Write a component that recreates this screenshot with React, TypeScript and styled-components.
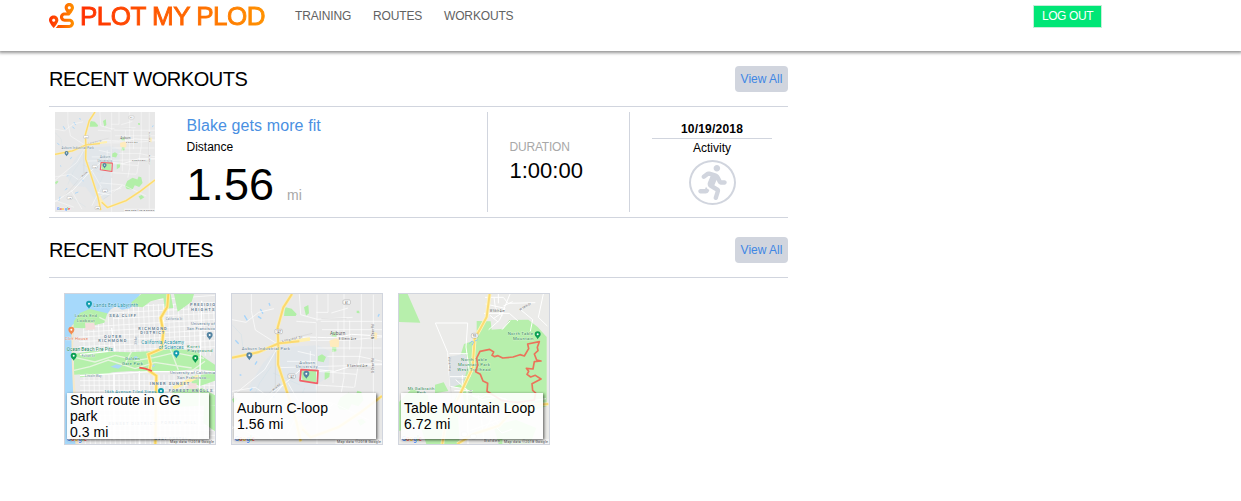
import React from 'react';
import styled, { createGlobalStyle } from 'styled-components';
import { FaRoute, FaRunning } from 'react-icons/fa';

const GlobalStyle = createGlobalStyle`
  * { box-sizing: border-box; }
  body { margin: 0; background: #fff; color: #000; font-family: "Liberation Sans", Arial, sans-serif; font-size: 12px; overflow: hidden; }
  h1, h2, p { margin: 0; font-weight: normal; }
`;

const Header = styled.header`
  display: flex;
  align-items: flex-start;
  height: 51px;
  padding-left: 49px;
  box-shadow: 0 1px 3px 1px rgba(0, 0, 0, 0.42);
`;
const Logo = styled.h1`
  display: flex;
  width: 246px;
  padding-top: 3px;
`;
const LogoName = styled.span`
  margin-left: 6px;
  height: 30px;
  margin-top: -3px;
  line-height: 32px;
  font-size: 26px;
  letter-spacing: -0.52px;
  white-space: nowrap;
  color: transparent;
  -webkit-text-stroke: 0.9px transparent;
  background: linear-gradient(90deg, #ff2f00, #ff9100);
  -webkit-background-clip: text;
  background-clip: text;
`;
const Nav = styled.nav`
  display: flex;
  flex: 1;
  padding-top: 9px;
`;
const NavLink = styled.a<{ $width: number }>`
  width: ${p => p.$width}px;
  line-height: 14px;
  letter-spacing: -0.15px;
  color: #626262;
`;
const LogOut = styled.button`
  width: 69px;
  height: 23px;
  margin: 5px 139px 0 0;
  padding: 0;
  border: 1px solid #c4eed8;
  background: #00e676;
  color: #fff;
  font: 12px/19px "Liberation Sans", Arial, sans-serif;
  letter-spacing: -0.4px;
`;
const Main = styled.main`
  width: 739px;
  margin: 15px 0 0 49px;
`;
const SectionHead = styled.div<{ $top?: number }>`
  display: flex;
  justify-content: space-between;
  align-items: center;
  height: 41px;
  padding-bottom: 14px;
  margin-top: ${p => p.$top ?? 0}px;
  border-bottom: 1px solid #d1d5de;
`;
const Title = styled.h2<{ $spacing: number }>`
  font-size: 20px;
  line-height: 26px;
  letter-spacing: ${p => p.$spacing}px;
`;
const ViewAll = styled.button`
  width: 53px;
  height: 26px;
  padding: 0;
  border: 0;
  border-radius: 4px;
  background: #d1d5de;
  color: #3f87e4;
  font: 12px/26px "Liberation Sans", Arial, sans-serif;
`;
const Workout = styled.article`
  display: flex;
  height: 111px;
  padding: 5px 0 5px 6px;
  border-bottom: 1px solid #d1d5de;
`;
const Summary = styled.div`
  width: 332px;
  padding: 4px 0 0 31.5px;
`;
const WorkoutName = styled.p`
  margin-bottom: 4px;
  font-size: 16px;
  line-height: 20px;
  letter-spacing: 0.1px;
  color: #4a90e2;
`;
const Label = styled.p<{ $muted?: boolean }>`
  line-height: 14px;
  letter-spacing: ${p => (p.$muted ? '-0.2px' : '0')};
  color: ${p => (p.$muted ? '#a8a8a8' : '#000')};
`;
const Distance = styled.p`
  margin-left: 0;
  font-size: 45px;
  line-height: 61px;
`;
const Unit = styled.span`
  margin-left: 13px;
  font-size: 14px;
  color: #a8a8a8;
`;
const Duration = styled.div`
  width: 142px;
  padding: 28px 0 0 21.5px;
  border-left: 1px solid #d1d5de;
`;
const Time = styled.p`
  font-size: 22px;
  line-height: 34px;
`;
const Activity = styled.div`
  display: flex;
  flex-direction: column;
  align-items: center;
  width: 159px;
  padding: 10px 16px 0 22px;
  border-left: 1px solid #d1d5de;
`;
const ActivityDate = styled.p`
  align-self: stretch;
  height: 17px;
  margin-bottom: 2px;
  border-bottom: 1px solid #d1d5de;
  text-align: center;
  font-weight: bold;
  line-height: 14px;
  letter-spacing: 0.2px;
`;
const ActivityIcon = styled.div`
  display: flex;
  align-items: flex-start;
  justify-content: center;
  width: 47px;
  height: 45px;
  margin-top: 5px;
  padding-top: 3px;
  border: 2px solid #d1d5de;
  border-radius: 50%;
  color: #d1d5de;
`;
const Routes = styled.div`
  display: flex;
  gap: 15px;
  padding: 15px 15px 0;
`;
const RouteCard = styled.article`
  position: relative;
  width: 152px;
  height: 152px;
  border: 1px solid #d1d5de;
`;
const Caption = styled.div`
  position: absolute;
  left: 2px;
  top: 99px;
  display: flex;
  flex-direction: column;
  justify-content: center;
  width: 142px;
  height: 46px;
  padding: 0 2px 0 3px;
  background: rgba(255, 255, 255, 0.9);
  box-shadow: 1px 1px 3px rgba(0, 0, 0, 0.65);
  font-size: 14px;
  line-height: 16px;
  letter-spacing: 0.06px;
`;
const MapSvg = styled.svg`
  display: block;
  flex: none;
  font-family: Roboto, sans-serif;
`;

interface PinProps { x: number; y: number; color: string; s?: number }
const Pin = ({ x, y, color, s = 1 }: PinProps) => (
  <g transform={`translate(${x} ${y}) scale(${s})`}>
    <path d="M0 12C-2 7-9 3-9-3A9 9 0 1 1 9-3C9 3 2 7 0 12Z" fill={color} />
    <circle cy="-3" r="3" fill="#fff" />
  </g>
);

interface TagProps { x: number; y: number; w: number; children: string; color?: string; size?: number; bold?: boolean; rotate?: number }
const Tag = ({ x, y, w, children, color = '#617b91', size = 12, bold, rotate = 0 }: TagProps) => (
  <text x={x} y={y} textLength={w} fontSize={size} fill={color} fontWeight={bold ? 600 : 400}
    stroke="#fff" strokeWidth="2" strokeOpacity=".6" paintOrder="stroke" transform={`rotate(${rotate} ${x} ${y})`}>{children}</text>
);

const Attribution = ({ x = 327 }: { x?: number }) => (
  <>
    <text x="20" y="460" fontSize="19" fontWeight="500" textLength="61" stroke="#fff" strokeWidth="2" paintOrder="stroke">
      <tspan fill="#4285f4">G</tspan><tspan fill="#ea4335">o</tspan><tspan fill="#fbbc05">o</tspan>
      <tspan fill="#4285f4">g</tspan><tspan fill="#34a853">l</tspan><tspan fill="#ea4335">e</tspan>
    </text>
    <rect x={x - 5} y="453" width="150" height="15" fill="#f5f5f5" opacity=".75" />
    <Tag x={x} y={464} w={132} color="#444" size={11}>Map data ©2018 Google</Tag>
  </>
);

const badges: [number, number, string][] = [[151, 131, '147'], [190, 265, '147'], [355, 43, '81']];
const southBadges: [number, number, string][] = [[236, 373, '29'], [77, 405, '15'], [203, 451, '85']];

const AuburnMap = ({ size, south }: { size: number; south?: boolean }) => (
  <MapSvg width={size} height={size} viewBox="12 18 450 450">
    <path fill="#e8e8e8" d="M12 18h450v450H12z" />
    <path fill="#e1e6ea" d="M150 178L270 172 305 190 300 265 268 290 264 390 205 430 150 355 95 350 60 300 105 225Z" />
    <g fill="#b2efa8">
      <path d="M173 58l18 4 15 16-3 6h-35l2-18ZM228 58l13-7 2 25-9 7ZM270 205l12-6 12 8-7 16-18-4ZM219 250l47-5 3 38-45-4ZM337 329l24-15 22 8 5-14 12 4 6 25-15 18-20-7-10 19-26-3-8-12ZM313 171h12v19l-13 2ZM290 253l16-4-2 18-14 9ZM12 334l10-7 6 5-12 12ZM388 397l14-5 12 10-17 11Z" />
      <path d="M312 132h14v15l-15-2ZM386 68h7l2 8-9-1Z" />
    </g>
    <g fill="none" stroke="#a5d4fb" strokeWidth="4">
      <path d="M49 82l9 15M97 63l8 14M90 85l10 7M22 157l10 10M66 308l7-8M81 230l6-10M35 260l5 2M123 45l3 8M58 370l9-10M30 417l5-18M102 384l15-6M135 322l4 8M450 86l4-8" />
    </g>
    <g fill="none" stroke="#d0e0e8" strokeWidth="1.5"><path d="M12 110l28 30 5 40M70 345l25-60 35-50M135 255l80 35M65 390l85 55M230 300l-35 80" /></g>
    <g fill="none" stroke="#fff" strokeWidth="2">
      <path d="M12 95l42 8 38-30 46-11M70 18v50l12 58 66 42M12 310l70-12 35 25 53-36M160 160l-50 85-98 80M205 100l60 4 2 364M267 20v135l-2 150M214 18l4 62 50 14 106-6M300 18v55h-35M348 18v250l-8 45M400 18v155l-20 125M436 20v450M278 100h184M282 125h180M222 157h130l110-10M267 180h193M298 205h95l70 15M155 239l312-9M270 250l115 9M267 291l110 7M177 220h86M209 190l52 12M180 285l40 70-42 85M215 337l102 9 105 50M205 400l55-25 50-15M12 416l85 30M85 370l48 85M310 75l50-15M330 100v53M365 98v87M315 185v100M247 189v58" />
      <path d="M160 160Q205 144 267 148T370 139L462 144M267 245L320 250 390 228H462M205 380L260 391 315 348M12 422L93 370 165 291 218 245" strokeWidth="3" />
    </g>
    <g fill="none" stroke="#c1c1c1"><path d="M142 193v102L53 399M155 160l98-24M267 100v215M280 92h75M434 112v140M358 240h70M230 410l60-40" strokeWidth="1" /></g>
    <path d="M304 158l20-7 10 5-2 22-25-2ZM436 131l12 4-2 20-10-4ZM208 410l8-18 7 20-4 35-15-6Z" fill="#ffebbd" />
    <g fill="none" stroke="#fff0b0" strokeWidth="10"><path d="M192 18L166 58 149 119 151 177 150 230 170 290 205 400 218 460M12 209L90 193 153 166 246 153M217 413L248 448 332 417 395 375 462 324" /></g>
    <g fill="none" stroke="#fbd970" strokeWidth="6"><path d="M192 18L166 58 149 119 151 177 150 230 170 290 205 400 218 460M12 209L90 193 153 166 214 160M222 424L248 448 332 417 395 375 462 324" /></g>
    {(south ? [...badges, ...southBadges] : badges).map(([x, y, t]) => (
      <g key={x}><rect x={x - 10} y={y - 7} width="22" height="13" rx="3" fill="#fff" stroke="#777" /><text x={x + 1} y={y + 4} fontSize="9" textAnchor="middle" fill="#555">{t}</text></g>
    ))}
    <Tag x={41} y={186} w={145} size={13}>Auburn Industrial Park</Tag>
    <Tag x={306} y={140} w={46} size={14} color="#555">Auburn</Tag>
    <Tag x={214} y={227} w={47} size={13}>Auburn</Tag>
    <Tag x={203} y={241} w={66} size={13}>University</Tag>
    <Tag x={163} y={162} w={62} size={9} color="#555" rotate={-12}>Longleaf Dr</Tag>
    <Tag x={332} y={157} w={52} size={9} color="#555">E Glenn Ave</Tag>
    <Tag x={358} y={237} w={60} size={9} color="#555">E Samford Ave</Tag>
    <Tag x={438} y={154} w={45} size={9} color="#555" rotate={-90}>N Dean Rd</Tag>
    <Tag x={438} y={254} w={43} size={9} color="#555" rotate={-90}>S Dean Rd</Tag>
    <Tag x={135} y={310} w={30} size={9} color="#555" rotate={-40}>Wire Rd</Tag>
    <Pin x={64} y={205} color="#5484a2" />
    <path d="M219 245L270 248 268 286 216 278Z" fill="none" stroke="#f16068" strokeWidth="5" strokeLinejoin="round" />
    <Pin x={235} y={260} color="#5484a2" />
    <Attribution />
  </MapSvg>
);

const ParkMap = () => (
  <MapSvg width="150" height="150" viewBox="15 18 450 450">
    <path fill="#e9e9e9" d="M15 18h450v450H15z" />
    <g fill="none" stroke="#fff" strokeWidth="2">
      <path d="M60 118l405-24M70 132l395-22M57 147l408-21M57 161l408-20M57 176l408-18M57 190l408-14M145 75l310-15M160 92l305-17M215 55l250-12M220 40l245-18M60 278h405M60 292h405M60 307h405M60 322h405M55 337h410M55 352h410M55 367h410M55 382h410M55 397h410M55 412h410M55 427h410M55 442h410" />
      {Array.from({ length: 27 }, (_, i) => <path key={i} d={`M${70 + i * 15} ${i < 9 ? 110 - i * 5 : 48}l6 155M${72 + i * 15} 260l4 208`} />)}
    </g>
    <path fill="#a6d9fb" d="M15 18H240L230 37 210 61 186 65 167 55 152 64 142 78 113 72 91 65 63 75 47 94 42 118 39 150 36 210 41 270 50 468H15Z" />
    <path fill="#b5f0ab" d="M42 99l18-24 29-12 24 6 29 7-9 28-30 8-32 9-32-2ZM214 43l30-25h88l8 42-25 2-5-32-38 10-24 18-32-4ZM342 18h60l-7 23-42 30ZM42 198l51-9 116 4 58-3 77-8 63 6 24 20 34 22v20l-54-7-60 5-70 3-69-2-170 11ZM395 265l70-11v24l-45 16-25-8ZM335 307l90-7 40 22v30l-125 5ZM60 260l80-8 25 4-105 12ZM432 350h33v80l-35-25Z" />
    <path fill="#f6e8c8" d="M34 115l7-8-2 98 18 263-11-1-11-255Z" />
    <path fill="#f3dedc" d="M75 104h28l3 20-29 3ZM383 286h27v16h-27Z" />
    <path fill="#add7f9" d="M151 236l18-7 18 4-12 9ZM268 229l18 2-5 7ZM220 207l9-3 6 6-12 3Z" />
    <g fill="none" stroke="#e6f4df" strokeWidth="4"><path d="M44 208l61 14 61-20 65 15 50-8 63-15 88 17M42 247l48-11 55-20 80 26 60-19 110 17M215 190l-18 34M330 181l25 65M118 88l25 12M435 220l-65 47" /></g>
    <g fill="none" stroke="#fff" strokeWidth="4"><path d="M60 263l210-12h195M162 256v200M238 250v218M425 38l-10 430M310 95v80M155 120l10 70M60 200l85-10" /></g>
    <path fill="none" stroke="#fff0a8" strokeWidth="11" d="M325 18l-3 38-20 34 8 42-5 50-40 17 7 30-4 20 21 14-3 205M415 265l-75 35" />
    <path fill="none" stroke="#fbd55f" strokeWidth="6" d="M325 18l-3 38-20 34 8 42-5 50-40 17 7 30-4 20 21 14-3 205" />
    <Pin x={87} y={50} color="#159eae" /><Pin x={34} y={128} color="#f28b50" /><Pin x={41} y={206} color="#0c9f53" /><Pin x={406} y={213} color="#0c9f53" /><Pin x={349} y={199} color="#159eae" /><Pin x={449} y={144} color="#5484a2" /><Pin x={303} y={312} color="#159eae" />
    <Tag x={100} y={56} w={134} size={14} color="#168d9f">Lands End Labyrinth</Tag>
    <Tag x={44} y={88} w={67} size={13} color="#42885c">Lands End</Tag><Tag x={50} y={102} w={54} size={13} color="#42885c">Lookout</Tag>
    <Tag x={148} y={87} w={80} bold>SEA CLIFF</Tag>
    <Tag x={390} y={54} w={75} bold>PRESIDIO</Tag><Tag x={393} y={69} w={70} bold>HEIGHTS</Tag>
    <Tag x={235} y={125} w={85} bold>RICHMOND</Tag><Tag x={241} y={138} w={72} bold>DISTRICT</Tag>
    <Tag x={132} y={149} w={52} bold>OUTER</Tag><Tag x={115} y={162} w={84} bold>RICHMOND</Tag>
    <Tag x={317} y={95} w={50} size={9}>California St</Tag>
    <Tag x={15} y={157} w={69} size={13} color="#e77b4d">Cliff House</Tag>
    <Tag x={20} y={188} w={139} size={14} color="#16875b">Ocean Beach Fire Pits</Tag>
    <Tag x={393} y={112} w={72} size={13}>University of</Tag><Tag x={380} y={126} w={85} size={13}>San Francisco</Tag>
    <Tag x={244} y={168} w={128} size={14} color="#168d9f">California Academy</Tag><Tag x={296} y={182} w={75} size={14} color="#168d9f">of Sciences</Tag>
    <Tag x={381} y={179} w={38} size={13} color="#16875b">Koret</Tag><Tag x={382} y={193} w={75} size={13} color="#16875b">Playground</Tag>
    <Tag x={195} y={217} w={44} size={13} color="#16875b">Golden</Tag><Tag x={186} y={231} w={63} size={13} color="#16875b">Gate Park</Tag>
    <Tag x={75} y={266} w={49} size={9}>Lincoln Way</Tag><Tag x={65} y={206} w={39} size={9}>Fulton St</Tag>
    <Tag x={231} y={170} w={25} size={8} rotate={-90}>30th Ave</Tag>
    <Tag x={330} y={258} w={135} size={13}>University of California</Tag><Tag x={351} y={273} w={100} size={13}>San Francisco...</Tag>
    <Tag x={269} y={290} w={119} bold>INNER SUNSET</Tag>
    <Tag x={326} y={313} w={131} bold>FOREST KNOLLS</Tag>
    <Tag x={133} y={316} w={156} size={13} color="#168d9f">16th Avenue Tiled Steps</Tag>
    <Tag x={145} y={412} w={142} bold>SUNSET DISTRICT</Tag><Tag x={303} y={408} w={105} bold>FOREST HILL</Tag><Tag x={282} y={455} w={100} bold>WEST PORTAL</Tag>
    <path d="M238 239l18 3 20 7" fill="none" stroke="#f1534e" strokeWidth="5" />
    <Attribution x={330} />
  </MapSvg>
);

const MountainMap = () => (
  <MapSvg width="150" height="150" viewBox="12 18 450 450">
    <path fill="#ebebe9" d="M12 18h450v450H12z" />
    <path fill="#b7efac" d="M12 18h26l38 86-64-2ZM245 99l42 1 3 25 35-3 18-26 57-1 28 22 27 30v208l-50 15-120-6-75 10-8-70-33-10v-72l28-22 10-32 38-13ZM12 342l38-40 50 20v35l70-6 16-32 8 149H94l-20-61-62 22ZM295 413l68-18 61 25-18 48h-95ZM120 290l26-7 14 26-40 7Z" />
    <path fill="#dde2e5" d="M158 207l53-10 10 27-16 62-40 13Z" />
    <g fill="none" stroke="#fff" strokeWidth="3">
      <path d="M270 28h55l14 18 82-2M272 48l58 13-17 36-32 28M297 28l4 31 21 25M267 76h76l26 23M345 18l-23 56-27 18M346 98l-25 27M310 18v28M325 54l28-13M378 66l35 29-7 35M445 18l-15 70 27 26M285 82l24 20M121 105h97l-5 72 12 90M121 105l37 88 7 102 51 9 3 164M163 197h55M165 266h55M202 261v55l61 12M182 275l35 32M178 308h55M223 320l38 15 50-8 50 18 92-13M231 348l42-27 60 12 15 41 47-32M264 347l50 66M315 350l-47 77M226 365l65 32M209 390l61-28M225 428l89-32M250 322l17 136M287 401l34 34 31-12M228 451l32-22" />
    </g>
    <path fill="none" stroke="#c9c9c9" d="M168 205l-5 61 10 90M186 275h35" />
    <path fill="none" stroke="#fff4bf" strokeWidth="11" d="M284 18l-9 69-19 35-17 30-6 87-44 93-38 80-9 56M460 348l-94 6-54 59-76 25-49 30" />
    <path fill="none" stroke="#fbdc73" strokeWidth="6" d="M284 18l-9 69-19 35-17 30-6 87-44 93-38 80-9 56M460 348l-94 6-54 59-76 25-49 30" />
    <rect x="229" y="136" width="20" height="14" rx="5" fill="#fff" stroke="#777" /><text x="233" y="147" fontSize="10" fill="#555">93</text>
    <rect x="199" y="432" width="18" height="13" rx="5" fill="#fff" stroke="#777" /><rect x="226" y="439" width="18" height="13" rx="5" fill="#fff" stroke="#777" />
    <path d="M223 167l8-8 5 3-5 10M240 159l8-4M20 362l9-9" fill="none" stroke="#92c9e9" strokeWidth="3" />
    <Tag x={338} y={140} w={76} size={13} color="#278251">North Table</Tag><Tag x={354} y={155} w={61} size={13} color="#278251">Mountain</Tag>
    <Tag x={198} y={220} w={78} size={13} color="#278251">North Table</Tag><Tag x={189} y={234} w={96} size={13} color="#278251">Mountain Park</Tag><Tag x={187} y={248} w={99} size={13} color="#278251">West Trailhead</Tag>
    <Tag x={38} y={305} w={80} size={13} color="#278251">Mt Galbraith</Tag><Tag x={65} y={318} w={28} size={13} color="#278251">Park</Tag>
    <Tag x={284} y={73} w={45} size={9} color="#555">W 56th Ave</Tag><Tag x={375} y={68} w={39} size={9} color="#555" rotate={-30}>W 58th Dr</Tag>
    <Tag x={168} y={249} w={43} size={8} color="#555" rotate={-94}>Pine Ridge</Tag><Tag x={231} y={345} w={38} size={8} color="#555" rotate={-90}>Ford St</Tag>
    <Pin x={428} y={142} color="#0c9f53" />
    <path d="M276 310L278 286 264 279 256 259 242 251 248 231 245 210 255 190 284 184 296 192 291 202 299 206 309 203 323 210 354 207 375 200 388 204 401 182 398 168 433 161 427 178 429 188 418 198 425 216 438 219 418 221 414 243 394 241 401 250 396 259 407 267 421 262 438 273 411 287 413 307 422 315 418 336 368 343 321 338 299 324Z" fill="none" stroke="#eb735a" strokeWidth="5" strokeLinejoin="round" />
    <Tag x={267} y={463} w={48} size={12} color="#555">Golden</Tag>
    <Attribution />
  </MapSvg>
);

const routes = [
  { name: 'Short route in GG park', miles: '0.3 mi', map: <ParkMap /> },
  { name: 'Auburn C-loop', miles: '1.56 mi', map: <AuburnMap size={150} /> },
  { name: 'Table Mountain Loop', miles: '6.72 mi', map: <MountainMap /> },
];

export default function App() {
  return (
    <>
      <GlobalStyle />
      <Header>
        <Logo>
          <svg width="25" height="25" viewBox="0 0 512 512">
            <defs><linearGradient id="warm" x1="0" x2="1"><stop stopColor="#ff2f00" /><stop offset="1" stopColor="#ff9100" /></linearGradient></defs>
            <FaRoute size={512} fill="url(#warm)" />
          </svg>
          <LogoName>PLOT MY PLOD</LogoName>
        </Logo>
        <Nav><NavLink $width={78}>TRAINING</NavLink><NavLink $width={71}>ROUTES</NavLink><NavLink $width={75}>WORKOUTS</NavLink></Nav>
        <LogOut>LOG OUT</LogOut>
      </Header>
      <Main>
        <SectionHead><Title $spacing={-0.45}>RECENT WORKOUTS</Title><ViewAll>View All</ViewAll></SectionHead>
        <Workout>
          <AuburnMap size={100} south />
          <Summary>
            <WorkoutName>Blake gets more fit</WorkoutName>
            <Label>Distance</Label>
            <Distance>1.56<Unit>mi</Unit></Distance>
          </Summary>
          <Duration><Label $muted>DURATION</Label><Time>1:00:00</Time></Duration>
          <Activity>
            <ActivityDate>10/19/2018</ActivityDate>
            <Label>Activity</Label>
            <ActivityIcon><FaRunning size={35} /></ActivityIcon>
          </Activity>
        </Workout>
        <SectionHead $top={19}><Title $spacing={-0.52}>RECENT ROUTES</Title><ViewAll>View All</ViewAll></SectionHead>
        <Routes>
          {routes.map(r => (
            <RouteCard key={r.name}>{r.map}<Caption><p>{r.name}</p><p>{r.miles}</p></Caption></RouteCard>
          ))}
        </Routes>
      </Main>
    </>
  );
}
